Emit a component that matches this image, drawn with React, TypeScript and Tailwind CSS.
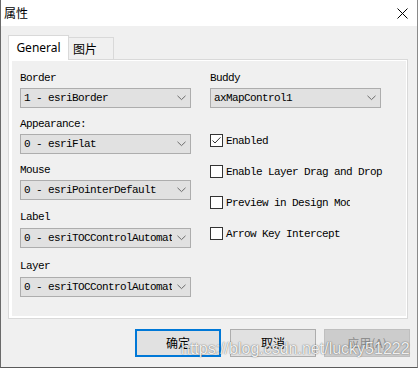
import type { ReactNode } from "react";

const mono = "font-['Liberation_Mono','DejaVu_Sans_Mono',monospace] text-[11px] tracking-[-0.6px] text-black";
const cjk = "font-['Noto_Sans_CJK_SC','Noto_Sans',sans-serif]";

function Chevron() {
  return (
    <svg width="9" height="6" viewBox="0 0 9 6">
      <path d="M0.5 0.8 L4.5 4.6 L8.5 0.8" fill="none" stroke="#6b6b6b" strokeWidth="1" />
    </svg>
  );
}

function Combo({ value, className = "" }: { value: string; className?: string }) {
  return (
    <div className={`flex h-[20px] w-[171px] items-center border border-[#adadad] bg-[#e1e1e1] ${className}`}>
      <span className={`flex-1 overflow-hidden whitespace-nowrap pl-[3px] leading-[18px] ${mono}`}>{value}</span>
      <span className="flex w-[18px] shrink-0 justify-center">
        <Chevron />
      </span>
    </div>
  );
}

function Label({ children, className = "" }: { children: ReactNode; className?: string }) {
  return <div className={`h-[14px] leading-[14px] ${mono} ${className}`}>{children}</div>;
}

function Check({ label, checked = false, className = "" }: { label: string; checked?: boolean; className?: string }) {
  return (
    <div className={`flex h-[13px] items-center gap-[3px] overflow-hidden ${className}`}>
      <span className="flex h-[13px] w-[13px] shrink-0 items-center justify-center border border-[#333333] bg-white">
        {checked && (
          <svg width="11" height="11" viewBox="0 0 11 11">
            <path d="M1.5 5.5 L4 8 L9.5 2.3" fill="none" stroke="#333333" strokeWidth="1" />
          </svg>
        )}
      </span>
      <span className={`whitespace-nowrap leading-[14px] ${mono}`}>{label}</span>
    </div>
  );
}

export default function App() {
  return (
    <div className="relative flex h-[368px] w-[418px] flex-col border-b border-l border-r border-b-[#5a5a5a] border-l-[#6a6a6a] border-r-[#8a8a8a] bg-[#f0f0f0]">
      {/* Title bar */}
      <div className="flex h-[26px] shrink-0 items-center justify-between bg-white pl-[3px] pr-[9px]">
        <span className={`text-[12px] leading-[14px] text-black ${cjk}`}>属性</span>
        <svg width="11" height="11" viewBox="0 0 11 11">
          <path d="M0.5 0.5 L10.5 10.5 M10.5 0.5 L0.5 10.5" stroke="#000" strokeWidth="1" />
        </svg>
      </div>

      <div className="flex flex-1 flex-col px-[7px] pt-[9px]">
        {/* Tabs */}
        <div className="flex h-[24px] items-end">
          <div className="relative z-10 mb-[-1px] flex h-[25px] w-[61px] items-center justify-center border border-b-0 border-[#d9d9d9] bg-white">
            <span className="font-['Noto_Sans','Liberation_Sans',sans-serif] text-[12px] leading-[16px] text-black">General</span>
          </div>
          <div className="flex h-[22px] w-[45px] items-center border-r border-t border-[#d9d9d9] pl-[4px]">
            <span className={`text-[12px] leading-[14px] text-black ${cjk}`}>图片</span>
          </div>
        </div>

        {/* Panel */}
        <div className="flex h-[260px] w-[400px] flex-col border border-[#d9d9d9] bg-white pb-[2px] pl-[3px] pr-[1px] pt-[1px]">
          <div className="flex flex-1 gap-[19px] bg-[#f0f0f0] pl-[8px] pt-[10px]">
            <div className="flex flex-col">
              <Label>Border</Label>
              <Combo value="1 - esriBorder" className="mt-[3px]" />
              <Label className="mt-[9px]">Appearance:</Label>
              <Combo value="0 - esriFlat" className="mt-[3px]" />
              <Label className="mt-[9px]">Mouse</Label>
              <Combo value="0 - esriPointerDefault" className="mt-[3px]" />
              <Label className="mt-[10px]">Label</Label>
              <Combo value="0 - esriTOCControlAutomatic" className="mt-[4px]" />
              <Label className="mt-[11px]">Layer</Label>
              <Combo value="0 - esriTOCControlAutomatic" className="mt-[4px]" />
            </div>
            <div className="flex flex-col">
              <Label>Buddy</Label>
              <Combo value="axMapControl1" className="mt-[3px]" />
              <Check label="Enabled" checked className="mt-[26px]" />
              <Check label="Enable Layer Drag and Drop" className="mt-[18px] w-[180px]" />
              <Check label="Preview in Design Mode" className="mt-[18px] w-[140px]" />
              <Check label="Arrow Key Intercept" className="mt-[18px]" />
            </div>
          </div>
        </div>

        {/* Buttons */}
        <div className="mt-[10px] flex justify-end gap-[8px]">
          <button className={`flex h-[28px] w-[86px] items-center justify-center border-2 border-[#0078d7] bg-[#e1e1e1] text-[12px] text-black ${cjk}`}>
            确定
          </button>
          <button className={`ml-[1px] flex h-[28px] w-[86px] items-center justify-center border border-[#adadad] bg-[#e1e1e1] text-[12px] text-black ${cjk}`}>
            取消
          </button>
          <button className={`flex h-[28px] w-[86px] items-center justify-center border border-[#bfbfbf] bg-[#cccccc] text-[12px] text-[#8d8d8d] ${cjk}`}>
            应用(A)
          </button>
        </div>
      </div>

      {/* Watermark */}
      <div className="pointer-events-none absolute left-[180px] top-[339px] whitespace-nowrap font-['Liberation_Sans',Arial,sans-serif] text-[16px] leading-[20px] text-white/90 [text-shadow:0_0_1px_rgba(0,0,0,0.55),0_0_2px_rgba(0,0,0,0.25)]">
        https://blog.csdn.net/lucky51222
      </div>
    </div>
  );
}
